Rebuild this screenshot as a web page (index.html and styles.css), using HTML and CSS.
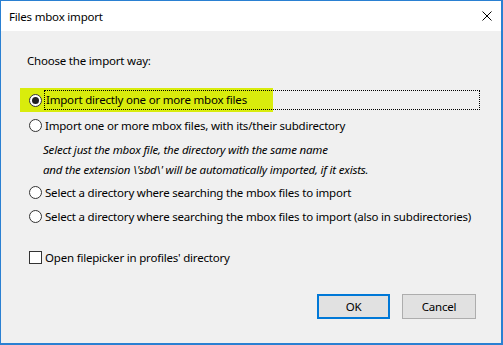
FILE: index.html
```
<!DOCTYPE html>
<html lang="en">
<head>
  <meta charset="UTF-8" />
  <title>Files mbox import</title>
  <link rel="stylesheet" href="styles.css">
</head>
<body>

  <div class="dialog">
    <div class="titlebar">
      <span class="title">Files mbox import</span>
      <svg class="close" width="10" height="10" viewBox="0 0 10 10">
        <path d="M0.5 0.5 L9.5 9.5 M9.5 0.5 L0.5 9.5" stroke="#000" stroke-width="1" fill="none"/>
      </svg>
    </div>

    <div class="content">
      <p class="prompt">Choose the import way:</p>

      <div class="options">
        <label class="option marked">
          <span class="radio checked"></span>
          <span class="text focus">Import directly one or more mbox files</span>
        </label>
        <label class="option">
          <span class="radio"></span>
          <span class="text">Import one or more mbox files, with its/their subdirectory</span>
        </label>
        <div class="hint">
          <p>Select just the mbox file, the directory with the same name</p>
          <p>and the extension \'sbd\' will be automatically imported, if it exists.</p>
        </div>
        <label class="option">
          <span class="radio"></span>
          <span class="text">Select a directory where searching the mbox files to import</span>
        </label>
        <label class="option">
          <span class="radio"></span>
          <span class="text">Select a directory where searching the mbox files to import (also in subdirectories)</span>
        </label>
      </div>

      <label class="option check">
        <span class="box"></span>
        <span class="text">Open filepicker in profiles' directory</span>
      </label>

      <div class="buttons">
        <button class="btn default">OK</button>
        <button class="btn">Cancel</button>
      </div>
    </div>
  </div>

</body>
</html>
```

FILE: styles.css
```
* {
  box-sizing: border-box;
  margin: 0;
  padding: 0;
}

body {
  font-family: 'Noto Sans', 'Open Sans', sans-serif;
  font-size: 11.5px;
  letter-spacing: -0.2px;
  color: #000;
  background: #f0f0f0;
}

.dialog {
  width: 503px;
  height: 345px;
  border: 1px solid #2a80d2;
  border-width: 1px 2px 2px 1px;
  background: #f0f0f0;
  display: flex;
  flex-direction: column;
}

.titlebar {
  height: 30px;
  background: #fff;
  display: flex;
  align-items: center;
  justify-content: space-between;
  padding: 0 9px 0 8px;
}

.close {
  display: block;
}

.content {
  flex: 1;
  padding: 20px 25px 0 19px;
  display: flex;
  flex-direction: column;
}

.prompt {
  line-height: 20px;
  padding-left: 7px;
}

.options {
  margin-top: 17px;
  display: flex;
  flex-direction: column;
}

.option {
  display: flex;
  align-items: center;
  height: 24px;
  padding-left: 9px;
}

.options .option:nth-child(2) {
  margin-top: 1px;
}

.option.marked {
  background: linear-gradient(to right, #d9ec0c 253px, transparent 253px);
}

.radio {
  width: 13px;
  height: 13px;
  border: 1px solid #333;
  border-radius: 50%;
  background: #fff;
  flex-shrink: 0;
  display: flex;
  align-items: center;
  justify-content: center;
}

.radio.checked::after {
  content: "";
  width: 7px;
  height: 7px;
  border-radius: 50%;
  background: #222;
}

.box {
  width: 13px;
  height: 13px;
  border: 1px solid #333;
  background: #fff;
  flex-shrink: 0;
}

.text {
  margin-left: 2px;
  padding-left: 1px;
  white-space: nowrap;
}

.text.focus {
  flex: 1;
  height: 20px;
  line-height: 18px;
  border: 1px dotted #000;
  margin-right: -4px;
}

.hint {
  margin-top: 3px;
  padding-left: 23px;
  font-style: italic;
}

.hint p {
  line-height: 20px;
}

.check {
  margin-top: 17px;
}

.buttons {
  margin-top: 25px;
  display: flex;
  justify-content: flex-end;
  gap: 12px;
}

.btn {
  width: 74px;
  height: 25px;
  font-family: inherit;
  font-size: 11.5px;
  letter-spacing: -0.2px;
  background: #e1e1e1;
  border: 1px solid #adadad;
  color: #000;
}

.btn.default {
  border: 2px solid #0078d7;
  width: 73px;
}
```
